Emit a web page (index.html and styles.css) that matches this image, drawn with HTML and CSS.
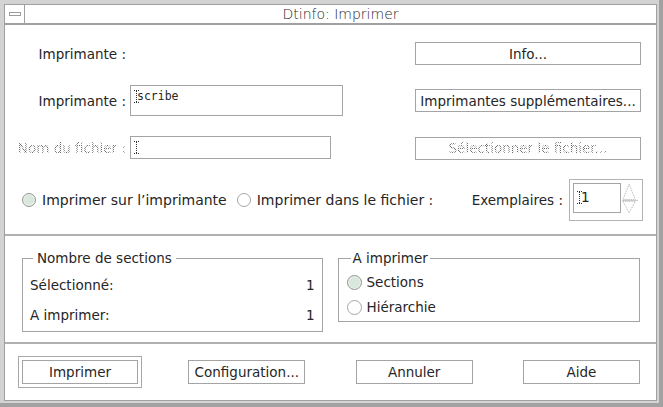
FILE: index.html
```html
<!DOCTYPE html>
<html lang="fr">
<head>
<meta charset="utf-8">
<title>Dtinfo: Imprimer</title>
<link rel="stylesheet" href="styles.css">
</head>
<body>
<div class="frame">
  <div class="titlebar">
    <div class="menu-btn"><span class="menu-glyph"></span></div>
    <div class="title">Dtinfo: Imprimer</div>
  </div>
  <div class="window-body">
    <section class="top">
      <div class="form">
        <div class="label">Imprimante :</div>
        <div></div>
        <div></div>
        <button class="btn wide">Info...</button>

        <div class="label">Imprimante :</div>
        <div class="field field-tall">
          <svg class="ibeam" width="5" height="13" viewBox="0 0 5 13"><path d="M0 0.5H5M0 12.5H5M2.5 1V12" stroke="#333" stroke-width="1" stroke-dasharray="1 1" fill="none"/></svg>
          <span class="value">scribe</span>
        </div>
        <div></div>
        <button class="btn wide">Imprimantes supplémentaires...</button>

        <div class="label disabled">Nom du fichier :</div>
        <div class="field field-short">
          <svg class="ibeam" width="5" height="13" viewBox="0 0 5 13"><path d="M0 0.5H5M0 12.5H5M2.5 1V12" stroke="#333" stroke-width="1" stroke-dasharray="1 1" fill="none"/></svg>
        </div>
        <div></div>
        <button class="btn wide"><span class="disabled">Sélectionner le fichier...</span></button>
      </div>

      <div class="dest-row">
        <label class="opt"><span class="radio on"></span><span>Imprimer sur l’imprimante</span></label>
        <label class="opt opt-second"><span class="radio"></span><span>Imprimer dans le fichier :</span></label>
        <div class="copies">
          <span>Exemplaires :</span>
          <div class="spinner">
            <div class="spin-field">
              <svg class="ibeam" width="5" height="13" viewBox="0 0 5 13"><path d="M0 0.5H5M0 12.5H5M2.5 1V12" stroke="#333" stroke-width="1" stroke-dasharray="1 1" fill="none"/></svg>
              <span class="spin-value">1</span>
            </div>
            <svg class="arrows" width="18" height="31" viewBox="0 0 18 31">
              <path d="M7.5 0.5L1 16.5H14Z" fill="none" stroke="#aaa" stroke-width="1" stroke-dasharray="1 1"/>
              <path d="M0 17.5H17" stroke="#c4c4c4" stroke-width="1"/>
              <path d="M1 18.5H14L7.5 30.5Z" fill="none" stroke="#aaa" stroke-width="1" stroke-dasharray="1 1"/>
            </svg>
          </div>
        </div>
      </div>
    </section>

    <section class="mid">
      <div class="group group-count">
        <span class="legend">Nombre de sections</span>
        <div class="stat"><span>Sélectionné:</span><span>1</span></div>
        <div class="stat"><span>A imprimer:</span><span>1</span></div>
      </div>
      <div class="group group-what">
        <span class="legend">A imprimer</span>
        <label class="opt"><span class="radio on"></span><span>Sections</span></label>
        <label class="opt"><span class="radio"></span><span>Hiérarchie</span></label>
      </div>
    </section>

    <section class="bottom">
      <button class="btn action default">Imprimer</button>
      <button class="btn action">Configuration...</button>
      <button class="btn action">Annuler</button>
      <button class="btn action">Aide</button>
    </section>
  </div>
</div>
</body>
</html>
```

FILE: styles.css
```css
* { box-sizing: border-box; }

html, body {
  margin: 0;
  padding: 0;
}

body {
  font-family: "DejaVu Sans", "Liberation Sans", sans-serif;
  font-size: 13.5px;
  line-height: 16px;
  color: #262626;
  background: #d3d3d3;
}

.frame {
  width: 663px;
  height: 407px;
  background: #d3d3d3;
  padding: 4px 2px 2px 4px;
  border-right: 4px solid #a2a2a2;
  border-bottom: 4px solid #a2a2a2;
  display: flex;
  flex-direction: column;
}

/* title bar */
.titlebar {
  height: 20px;
  flex: none;
  display: flex;
  background: #fff;
  border: 1px solid #a0a0a0;
}

.menu-btn {
  width: 20px;
  border-right: 1px solid #a0a0a0;
  display: flex;
  align-items: center;
  justify-content: center;
}

.menu-glyph {
  width: 12px;
  height: 4px;
  border: 1px solid #9c9c9c;
  background: #fff;
}

.title {
  flex: 1;
  text-align: center;
  line-height: 18px;
  font-size: 14px;
  font-weight: 200;
  color: #1e1e1e;
}

/* window body */
.window-body {
  flex: 1;
  background: #fff;
  border: 1px solid #a0a0a0;
  display: flex;
  flex-direction: column;
}

.top {
  height: 211px;
  flex: none;
  padding-top: 17px;
  border-bottom: 2px solid #b0b0b0;
}

.form {
  display: grid;
  grid-template-columns: 125px 213px 72px 226px;
  grid-template-rows: 23px 31px 24px;
  row-gap: 20px;
}

.label {
  align-self: center;
  text-align: right;
  padding-right: 4px;
  white-space: nowrap;
}

.disabled {
  color: transparent;
  background-image: repeating-conic-gradient(#6a6a6a 0 25%, transparent 0 50%);
  background-size: 2px 2px;
  -webkit-background-clip: text;
  background-clip: text;
}

.btn {
  font: inherit;
  color: inherit;
  margin: 0;
  padding: 0;
  background: #fff;
  border: 1px solid #a4a4a4;
  border-radius: 0;
  display: flex;
  align-items: center;
  justify-content: center;
  white-space: nowrap;
}

.wide {
  width: 226px;
  height: 23px;
  align-self: center;
}

.field {
  background: #fff;
  border: 1px solid #a4a4a4;
  display: flex;
  align-items: flex-start;
  padding: 4px 3px;
}

.field-tall {
  height: 31px;
}

.field-short {
  width: 201px;
  height: 23px;
  padding-top: 4px;
}

.ibeam {
  flex: none;
  margin-right: -2px;
  display: block;
}

.value {
  font-family: "DejaVu Sans Mono", "Liberation Mono", monospace;
  font-size: 11.5px;
  line-height: 13px;
}

/* destination row */
.dest-row {
  margin-top: 19px;
  height: 42px;
  display: flex;
  align-items: center;
  padding-left: 17px;
  padding-right: 13px;
}

.dest-row .opt {
  font-size: 14px;
}

.opt {
  display: flex;
  align-items: center;
  gap: 6px;
  white-space: nowrap;
}

.opt-second {
  margin-left: 10px;
}

.radio {
  width: 14px;
  height: 14px;
  border-radius: 50%;
  border: 1px solid #a6a6a6;
  background: #fff;
  flex: none;
}

.radio.on {
  background: #d8e8dc;
  border-color: #949494;
  box-shadow: inset 0 0 0 1px #eef5f0;
}

.copies {
  margin-left: auto;
  display: flex;
  align-items: center;
  gap: 6px;
  white-space: nowrap;
}

.spinner {
  width: 74px;
  height: 42px;
  border: 1px solid #b4b4b4;
  padding: 3px;
  display: flex;
  align-items: flex-start;
}

.spin-field {
  width: 50px;
  height: 30px;
  border: 1px solid #a4a4a4;
  display: flex;
  align-items: center;
  padding: 0 3px 2px;
}

.spin-value {
  margin-left: 1px;
  line-height: 14px;
}

.arrows {
  display: block;
  margin-left: 1px;
}

/* middle */
.mid {
  height: 108px;
  flex: none;
  border-bottom: 2px solid #b0b0b0;
  padding: 22px 16px 0 17px;
  display: flex;
  align-items: flex-start;
  gap: 15px;
}

.group {
  position: relative;
  border: 1px solid #a4a4a4;
}

.legend {
  position: absolute;
  top: -9px;
  left: 10px;
  padding: 0 4px;
  background: #fff;
  white-space: nowrap;
}

.group-count {
  width: 301px;
  height: 74px;
  padding: 16px 7px 0;
  display: flex;
  flex-direction: column;
  gap: 10px;
}

.stat {
  height: 20px;
  display: flex;
  align-items: center;
  justify-content: space-between;
}

.group-what {
  width: 303px;
  height: 64px;
  padding: 13px 8px 0;
  display: flex;
  flex-direction: column;
  gap: 5px;
}

.group-what .legend {
  left: 12px;
  padding: 0 2px;
}

.group-what .opt {
  height: 20px;
  gap: 5px;
}

.group-what .radio {
  width: 15px;
  height: 15px;
}

/* bottom buttons */
.bottom {
  flex: 1;
  padding: 16px 16px 0 17px;
  display: flex;
  justify-content: space-between;
  align-items: flex-start;
}

.action {
  width: 117px;
  height: 24px;
}

.default {
  width: 116px;
  outline: 1px solid #a8a8a8;
  outline-offset: 3px;
}
```
